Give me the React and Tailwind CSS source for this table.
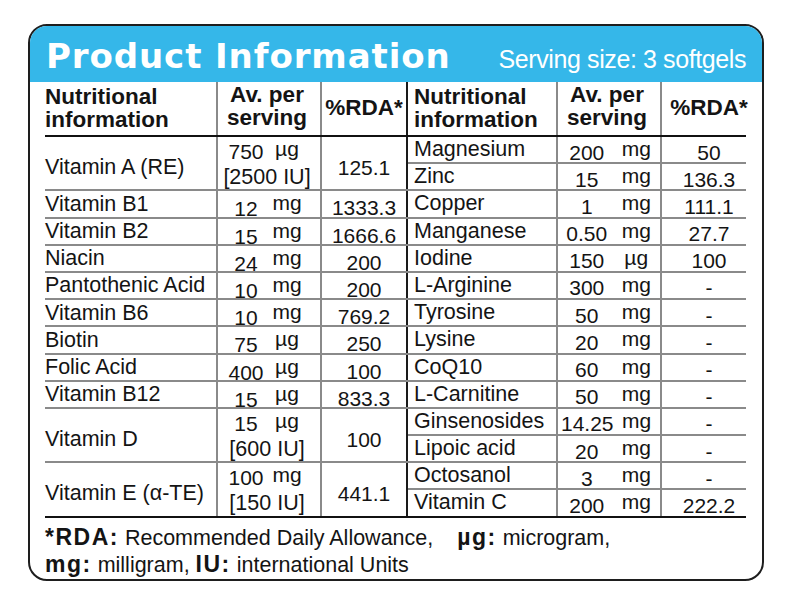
import React from "react";

const left = [
  { name: "Vitamin A (RE)", n: "750", u: "µg", extra: "[2500 IU]", rda: "125.1" },
  { name: "Vitamin B1", n: "12", u: "mg", rda: "1333.3" },
  { name: "Vitamin B2", n: "15", u: "mg", rda: "1666.6" },
  { name: "Niacin", n: "24", u: "mg", rda: "200" },
  { name: "Pantothenic Acid", n: "10", u: "mg", rda: "200" },
  { name: "Vitamin B6", n: "10", u: "mg", rda: "769.2" },
  { name: "Biotin", n: "75", u: "µg", rda: "250" },
  { name: "Folic Acid", n: "400", u: "µg", rda: "100" },
  { name: "Vitamin B12", n: "15", u: "µg", rda: "833.3" },
  { name: "Vitamin D", n: "15", u: "µg", extra: "[600 IU]", rda: "100" },
  { name: "Vitamin E (α-TE)", n: "100", u: "mg", extra: "[150 IU]", rda: "441.1" },
];

const right = [
  { name: "Magnesium", n: "200", u: "mg", rda: "50" },
  { name: "Zinc", n: "15", u: "mg", rda: "136.3" },
  { name: "Copper", n: "1", u: "mg", rda: "111.1" },
  { name: "Manganese", n: "0.50", u: "mg", rda: "27.7" },
  { name: "Iodine", n: "150", u: "µg", rda: "100" },
  { name: "L-Arginine", n: "300", u: "mg", rda: "-" },
  { name: "Tyrosine", n: "50", u: "mg", rda: "-" },
  { name: "Lysine", n: "20", u: "mg", rda: "-" },
  { name: "CoQ10", n: "60", u: "mg", rda: "-" },
  { name: "L-Carnitine", n: "50", u: "mg", rda: "-" },
  { name: "Ginsenosides", n: "14.25", u: "mg", rda: "-" },
  { name: "Lipoic acid", n: "20", u: "mg", rda: "-" },
  { name: "Octosanol", n: "3", u: "mg", rda: "-" },
  { name: "Vitamin C", n: "200", u: "mg", rda: "222.2" },
];

function HeaderRow({ side }) {
  const isLeft = side === "left";
  return (
    <div className="flex h-[55px] border-b-2 border-[#111]">
      <div
        className={
          isLeft
            ? "w-[173px] border-r-2 border-[#8a8a8a] pt-[3px] text-[22.5px] font-bold leading-[23px]"
            : "w-[150px] border-r-2 border-[#8a8a8a] pl-[6px] pt-[3px] text-[22.5px] font-bold leading-[23px]"
        }
      >
        Nutritional
        <br />
        information
      </div>
      <div className="w-[104px] border-r-2 border-[#8a8a8a] pr-[4px] pt-[1px] text-center text-[22.5px] font-bold leading-[23px]">
        Av. per
        <br />
        serving
      </div>
      <div
        className={
          isLeft
            ? "flex w-[86px] items-center justify-center border-r-2 border-[#1a1a1a] text-[22.5px] font-bold leading-none"
            : "flex w-[84px] items-center justify-center pl-[10px] text-[22.5px] font-bold leading-none"
        }
      >
        %RDA*
      </div>
    </div>
  );
}

function LeftRow({ row, last }) {
  const double = Boolean(row.extra);
  const line = last ? "border-[#111]" : "border-[#8a8a8a]";
  return (
    <div className={`flex border-b-2 ${line} ${double ? "h-[54.4px]" : "h-[27.2px]"}`}>
      <div
        className={`w-[173px] border-r-2 border-[#8a8a8a] text-[21.5px] leading-none ${
          double ? "pt-[20px]" : "pt-[2.5px]"
        }`}
      >
        {row.name}
      </div>
      <div className="w-[104px] border-r-2 border-[#8a8a8a]">
        {double ? (
          <div className="flex flex-col pt-[4px]">
            <div className="flex h-[26px] items-start pl-[2px]">
              <span className="w-[52px] text-center text-[21px] leading-none">{row.n}</span>
              <span className="-mt-[3px] w-[30px] text-center text-[21px] leading-none">{row.u}</span>
            </div>
            <div className="pr-[4px] text-center text-[21.5px] leading-none">{row.extra}</div>
          </div>
        ) : (
          <div className="flex items-start pl-[2px]">
            <span className="mt-[7px] w-[52px] text-center text-[21px] leading-none">{row.n}</span>
            <span className="mt-[1px] w-[30px] text-center text-[21px] leading-none">{row.u}</span>
          </div>
        )}
      </div>
      <div
        className={`w-[86px] border-r-2 border-[#1a1a1a] text-center text-[21px] leading-none ${
          double ? "pt-[20px]" : "pt-[6px]"
        }`}
      >
        {row.rda}
      </div>
    </div>
  );
}

function RightRow({ row, last }) {
  const line = last ? "border-[#111]" : "border-[#8a8a8a]";
  return (
    <div className={`flex h-[27.2px] border-b-2 ${line}`}>
      <div className="w-[150px] border-r-2 border-[#8a8a8a] pl-[6px] pt-[2px] text-[21.5px] leading-none">
        {row.name}
      </div>
      <div className="flex w-[104px] items-start border-r-2 border-[#8a8a8a] pl-[3px]">
        <span className="mt-[4.5px] w-[52px] text-center text-[21px] leading-none">{row.n}</span>
        <span className="mt-[1px] w-[48px] text-center text-[21px] leading-none">{row.u}</span>
      </div>
      <div className="w-[84px] pl-[10px] pt-[4.5px] text-center text-[21px] leading-none">{row.rda}</div>
    </div>
  );
}

export default function App() {
  const bold = "text-[23px] font-bold tracking-[1.5px]";
  return (
    <div className="h-[600px] w-[790px] bg-white pl-[28px] pt-[24px] font-['Liberation_Sans',Arial,sans-serif] text-[#141414]">
      <div className="h-[557px] w-[736px] overflow-hidden rounded-[19px] border-2 border-[#1e1e1e]">
        {/* blue title bar */}
        <div className="flex h-[56px] items-baseline justify-between bg-[#35b7e9] pl-[16px] pr-[16px] pt-[13px] text-white">
          <span className="font-['DejaVu_Sans',sans-serif] text-[34px] font-bold leading-none tracking-[0.9px]">
            Product Information
          </span>
          <span className="text-[25px] leading-none tracking-[-0.4px]">Serving size: 3 softgels</span>
        </div>

        {/* two tables side by side */}
        <div className="flex pl-[15px]">
          <div className="w-[363px]">
            <HeaderRow side="left" />
            {left.map((row, i) => (
              <LeftRow key={row.name} row={row} last={i === left.length - 1} />
            ))}
          </div>
          <div className="w-[338px]">
            <HeaderRow side="right" />
            {right.map((row, i) => (
              <RightRow key={row.name} row={row} last={i === right.length - 1} />
            ))}
          </div>
        </div>

        {/* legend */}
        <div className="pl-[15px] pt-[6px] text-[21.5px] leading-[26px]">
          <div>
            <span className={bold}>*RDA:</span> Recommended Daily Allowance,
            <span className={`${bold} ml-[24px]`}>µg:</span> microgram,
          </div>
          <div>
            <span className={bold}>mg:</span> milligram, <span className={bold}>IU:</span> international Units
          </div>
        </div>
      </div>
    </div>
  );
}
